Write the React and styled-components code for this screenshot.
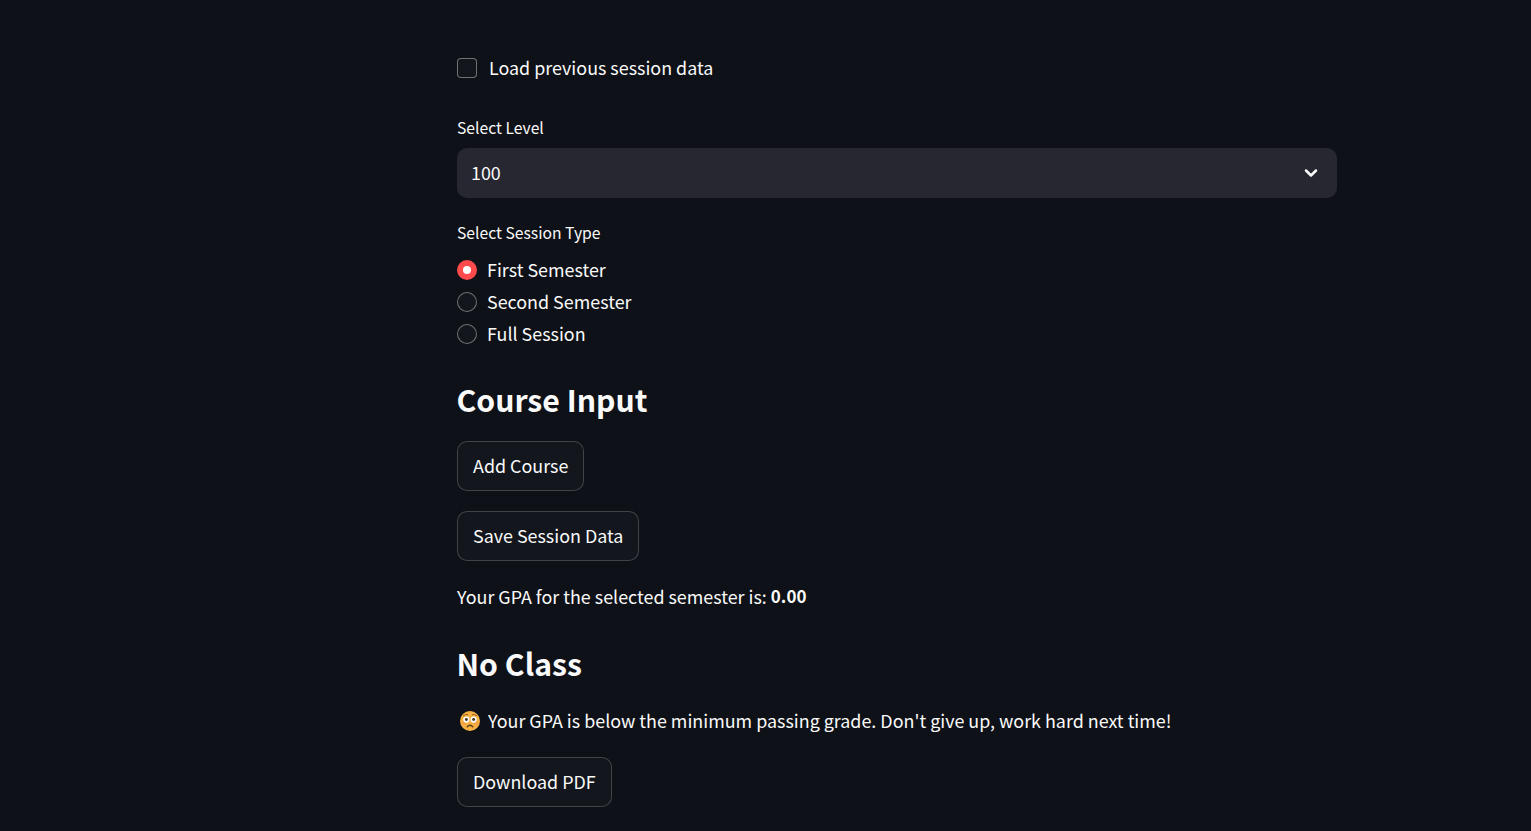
import React, { useState } from "react";
import styled, { createGlobalStyle } from "styled-components";
import { ChevronDown } from "lucide-react";

const GlobalStyle = createGlobalStyle`
  html, body {
    margin: 0;
    padding: 0;
    background: #0e1117;
  }
  body {
    font-family: "Noto Sans CJK SC", "Noto Sans", sans-serif;
    color: #fafafa;
  }
`;

const Page = styled.div`
  height: 831px;
  overflow: hidden;
  background: #0e1117;
  padding: 58px 0 0 457px;
  box-sizing: border-box;
`;

const Column = styled.main`
  width: 880px;
  display: flex;
  flex-direction: column;
`;

const CheckRow = styled.label`
  display: flex;
  align-items: center;
  gap: 12px;
  height: 20px;
  font-size: 17.9px;
  line-height: 20px;
`;

const CheckBox = styled.span`
  width: 20px;
  height: 20px;
  box-sizing: border-box;
  border: 1px solid rgba(250, 250, 250, 0.4);
  border-radius: 4px;
  background: #13161d;
`;

const RowText = styled.span`
  margin-bottom: 2px;
`;

const FieldLabel = styled.div`
  font-size: 15.7px;
  line-height: 20px;
  margin-top: ${(p) => p.$top}px;
  margin-bottom: 1px;
`;

const SelectBox = styled.div`
  height: 50px;
  margin-top: 9px;
  padding: 0 16px 0 14px;
  border-radius: 10px;
  background: #262730;
  display: flex;
  align-items: center;
  justify-content: space-between;
  font-size: 17.9px;
`;

const RadioGroup = styled.div`
  display: flex;
  flex-direction: column;
  gap: 12px;
  margin-top: 16px;
`;

const RadioRow = styled.label`
  display: flex;
  align-items: center;
  gap: 10px;
  height: 20px;
  font-size: 17.9px;
  line-height: 20px;
`;

const RadioDot = styled.span`
  width: 20px;
  height: 20px;
  box-sizing: border-box;
  border-radius: 50%;
  display: flex;
  align-items: center;
  justify-content: center;
  background: ${(p) => (p.$on ? "#ff4b4b" : "#13161d")};
  border: ${(p) => (p.$on ? "none" : "1px solid rgba(250, 250, 250, 0.4)")};
  &::after {
    content: "";
    display: ${(p) => (p.$on ? "block" : "none")};
    width: 8px;
    height: 8px;
    border-radius: 50%;
    background: #fff;
  }
`;

const Heading = styled.h2`
  margin: ${(p) => p.$top}px 0 0 -0.5px;
  font-size: 30.2px;
  line-height: 44px;
  font-weight: 700;
  color: #fafafa;
`;

const ActionButton = styled.button`
  align-self: flex-start;
  height: 50px;
  margin-top: ${(p) => p.$top}px;
  padding: 0 15px 2px;
  border: 1px solid rgba(250, 250, 250, 0.2);
  border-radius: 10px;
  background: #13161d;
  color: #fafafa;
  font-family: inherit;
  font-size: 17.9px;
`;

const Paragraph = styled.p`
  display: flex;
  align-items: center;
  gap: ${(p) => p.$gap || 0}px;
  margin: ${(p) => p.$top}px 0 ${(p) => p.$bottom || 0}px;
  font-size: 17.9px;
  line-height: 28px;
  white-space: pre;
  strong {
    font-weight: 700;
    font-size: 17px;
  }
`;

const FaceIcon = styled.svg`
  margin: 2px 0 0 3px;
  flex: none;
`;

const FlushedFace = () => (
  <FaceIcon width="20" height="20" viewBox="0 0 22 22" aria-hidden="true">
    <circle cx="11" cy="11" r="11" fill="#f8b244" />
    <ellipse cx="4.2" cy="13.4" rx="3" ry="2.2" fill="#ee8a4c" opacity="0.35" />
    <ellipse cx="17.8" cy="13.4" rx="3" ry="2.2" fill="#ee8a4c" opacity="0.35" />
    <circle cx="7" cy="9.4" r="3.4" fill="#fff" />
    <circle cx="15" cy="9.4" r="3.4" fill="#fff" />
    <circle cx="7" cy="9.4" r="1.6" fill="#4a3322" />
    <circle cx="15" cy="9.4" r="1.6" fill="#4a3322" />
    <path d="M3.8 5 Q6 3.2 8.4 4 M13.6 4 Q16 3.2 18.2 5" fill="none" stroke="#8a5a24" strokeWidth="1.1" strokeLinecap="round" />
    <path d="M8 17.4 Q11 14 14 17.4" fill="none" stroke="#5b3a1e" strokeWidth="1.6" strokeLinecap="round" />
  </FaceIcon>
);

const sessionTypes = ["First Semester", "Second Semester", "Full Session"];

export default function App() {
  const [session] = useState("First Semester");

  return (
    <Page>
      <GlobalStyle />
      <Column>
        <CheckRow>
          <CheckBox />
          <RowText>Load previous session data</RowText>
        </CheckRow>

        <FieldLabel $top={40}>Select Level</FieldLabel>
        <SelectBox>
          <RowText>100</RowText>
          <ChevronDown size={20} strokeWidth={3} color="#fafafa" />
        </SelectBox>

        <FieldLabel $top={25}>Select Session Type</FieldLabel>
        <RadioGroup>
          {sessionTypes.map((name) => (
            <RadioRow key={name}>
              <RadioDot $on={name === session} />
              <RowText>{name}</RowText>
            </RadioRow>
          ))}
        </RadioGroup>

        <Heading $top={33}>Course Input</Heading>
        <ActionButton $top={20}>Add Course</ActionButton>
        <ActionButton $top={20}>Save Session Data</ActionButton>

        <Paragraph $top={21}>
          Your GPA for the selected semester is: <strong>0.00</strong>
        </Paragraph>

        <Heading $top={31}>No Class</Heading>
        <Paragraph $top={21} $gap={8} $bottom={1}>
          <FlushedFace />
          Your GPA is below the minimum passing grade. Don't give up, work hard next time!
        </Paragraph>
        <ActionButton $top={22}>Download PDF</ActionButton>
      </Column>
    </Page>
  );
}
